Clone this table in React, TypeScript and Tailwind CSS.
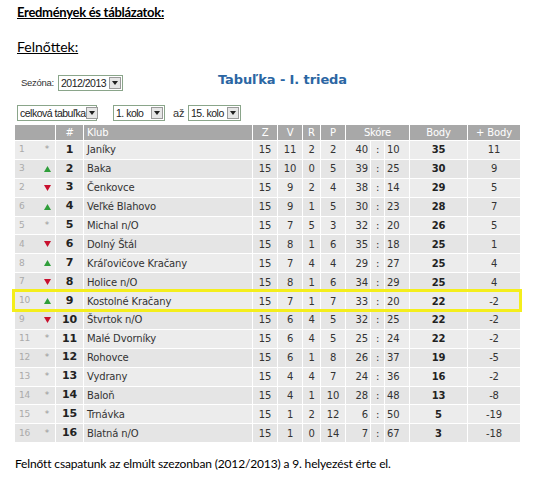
import React from "react";

type Row = [number, "s" | "u" | "d", number, string, number, number, number, number, number, number, number, number];

const rows: Row[] = [
  [1, "s", 1, "Janíky", 15, 11, 2, 2, 40, 10, 35, 11],
  [3, "u", 2, "Baka", 15, 10, 0, 5, 39, 25, 30, 9],
  [2, "d", 3, "Čenkovce", 15, 9, 2, 4, 38, 14, 29, 5],
  [6, "u", 4, "Veľké Blahovo", 15, 9, 1, 5, 30, 23, 28, 7],
  [5, "s", 5, "Michal n/O", 15, 7, 5, 3, 32, 20, 26, 5],
  [4, "d", 6, "Dolný Štál", 15, 8, 1, 6, 35, 18, 25, 1],
  [8, "u", 7, "Kráľovičove Kračany", 15, 7, 4, 4, 29, 27, 25, 4],
  [7, "d", 8, "Holice n/O", 15, 8, 1, 6, 34, 29, 25, 4],
  [10, "u", 9, "Kostolné Kračany", 15, 7, 1, 7, 33, 20, 22, -2],
  [9, "d", 10, "Štvrtok n/O", 15, 6, 4, 5, 32, 25, 22, -2],
  [11, "s", 11, "Malé Dvorníky", 15, 6, 4, 5, 25, 24, 22, -2],
  [12, "s", 12, "Rohovce", 15, 6, 1, 8, 26, 37, 19, -5],
  [13, "s", 13, "Vydrany", 15, 4, 4, 7, 24, 36, 16, -2],
  [14, "s", 14, "Baloň", 15, 4, 1, 10, 28, 48, 13, -8],
  [15, "s", 15, "Trnávka", 15, 1, 2, 12, 6, 50, 5, -19],
  [16, "s", 16, "Blatná n/O", 15, 1, 0, 14, 7, 67, 3, -18],
];

const grid = "grid grid-cols-[40px_28px_169px_25px_25px_18px_25px_25px_14px_25px_58px_53px]";

function Arrow({ t }: { t: "s" | "u" | "d" }) {
  if (t === "u")
    return (
      <svg width="7" height="6" viewBox="0 0 7 6">
        <polygon points="3.5,0 7,6 0,6" fill="#2f9e3a" />
      </svg>
    );
  if (t === "d")
    return (
      <svg width="7" height="6" viewBox="0 0 7 6">
        <polygon points="0,0 7,0 3.5,6" fill="#c8102e" />
      </svg>
    );
  return <span className="text-[9px] text-[#999] leading-none">*</span>;
}

function Select({ label, w }: { label: string; w: number }) {
  return (
    <div
      className="flex h-[16px] items-center border border-[#8aa58a] bg-white"
      style={{ width: w }}
    >
      <span className="flex-1 pl-[2px] text-[10.5px] leading-none tracking-[-0.5px] text-[#222] font-['Liberation_Sans',sans-serif] whitespace-nowrap">
        {label}
      </span>
      <span className="mr-[1px] flex h-[12px] w-[12px] shrink-0 items-center justify-center border border-[#9a9a9a] bg-[#e6e6e6]">
        <svg width="6" height="4" viewBox="0 0 6 4">
          <polygon points="0,0 6,0 3,4" fill="#222" />
        </svg>
      </span>
    </div>
  );
}

export default function App() {
  return (
    <div className="w-[535px] h-[480px] bg-white relative overflow-hidden">
      <div className="pl-[17px] pt-[3px] font-['Lato',sans-serif] text-black">
        <div className="font-bold underline leading-[18px] text-[13px] tracking-[-0.3px]">Eredmények és táblázatok:</div>
        <div className="mt-[17px] underline leading-[18px] text-[14px]">Felnőttek:</div>
      </div>

      <div className="mt-[19px] flex items-center h-[16px]">
        <span className="ml-[21px] w-[37px] text-[9.5px] text-[#333] font-['Liberation_Sans',sans-serif] tracking-[-0.3px] whitespace-nowrap">Sezóna:</span>
        <Select label="2012/2013" w={65} />
        <span className="ml-[95px] -mt-[6px] text-[13px] font-bold text-[#2b66a3] font-['DejaVu_Sans',sans-serif] tracking-[-0.1px] whitespace-nowrap">
          Tabuľka - I. trieda
        </span>
      </div>

      <div className="mt-[14px] flex items-center h-[16px]">
        <div className="ml-[17px]">
          <Select label="celková tabuľka" w={80} />
        </div>
        <div className="ml-[16px]">
          <Select label="1. kolo" w={52} />
        </div>
        <span className="ml-[8px] w-[15px] text-[11px] text-[#333] font-['Liberation_Sans',sans-serif]">až</span>
        <Select label="15. kolo" w={53} />
      </div>

      <div className="relative ml-[15px] mt-[4px] w-[505px] font-['DejaVu_Sans',sans-serif] text-[10px] tracking-[-0.15px]">
        <div className={`${grid} h-[15px] bg-[#a8a8a8] text-white items-center`}>
          <div className="h-full" />
          <div className="h-full border-l border-white flex items-center justify-center">#</div>
          <div className="h-full border-l border-white flex items-center pl-[3px]">Klub</div>
          <div className="h-full border-l border-white flex items-center justify-center">Z</div>
          <div className="h-full border-l border-white flex items-center justify-center">V</div>
          <div className="h-full border-l border-white flex items-center justify-center">R</div>
          <div className="h-full border-l border-white flex items-center justify-center">P</div>
          <div className="col-span-3 h-full border-l border-white flex items-center justify-center">Skóre</div>
          <div className="h-full border-l border-white flex items-center justify-center">Body</div>
          <div className="h-full border-l border-white flex items-center justify-center">+ Body</div>
        </div>
        {rows.map((r, i) => {
          const bg = i % 2 === 0 ? "bg-[#ececec]" : "bg-[#e5e5e5]";
          return (
            <div key={i} className={`${grid} h-[18.9px] border-t border-white ${bg} text-[#333]`}>
              <div className="flex items-center h-full">
                <span className="w-[24px] pl-[4px] text-[9px] text-[#aaa]">{r[0]}</span>
                <span className="w-[16px] flex justify-center items-center"><Arrow t={r[1]} /></span>
              </div>
              <div className="border-l border-white flex items-center justify-center font-bold text-[#222] text-[11px]">{r[2]}</div>
              <div className="border-l border-white flex items-center pl-[3px] whitespace-nowrap">{r[3]}</div>
              <div className="border-l border-white flex items-center justify-center">{r[4]}</div>
              <div className="border-l border-white flex items-center justify-center">{r[5]}</div>
              <div className="border-l border-white flex items-center justify-center">{r[6]}</div>
              <div className="border-l border-white flex items-center justify-center">{r[7]}</div>
              <div className="border-l border-white flex items-center justify-end pr-[2px]">{r[8]}</div>
              <div className="border-l border-white flex items-center justify-center">:</div>
              <div className="border-l border-white flex items-center justify-start pl-[2px]">{r[9]}</div>
              <div className="border-l border-white flex items-center justify-center font-bold text-[#222]">{r[10]}</div>
              <div className="border-l border-white flex items-center justify-center">{r[11]}</div>
            </div>
          );
        })}
        <div className="absolute left-[-3px] top-[164px] w-[510px] h-[23px] border-[3px] border-[#f4ee1c] pointer-events-none" />
      </div>

      <div className="mt-[13px] pl-[15px] font-['Lato',sans-serif] text-[12px] tracking-[-0.15px] text-black leading-[18px] whitespace-nowrap">
        Felnőtt csapatunk az elmúlt szezonban (2012/2013) a 9. helyezést érte el.
      </div>
    </div>
  );
}
